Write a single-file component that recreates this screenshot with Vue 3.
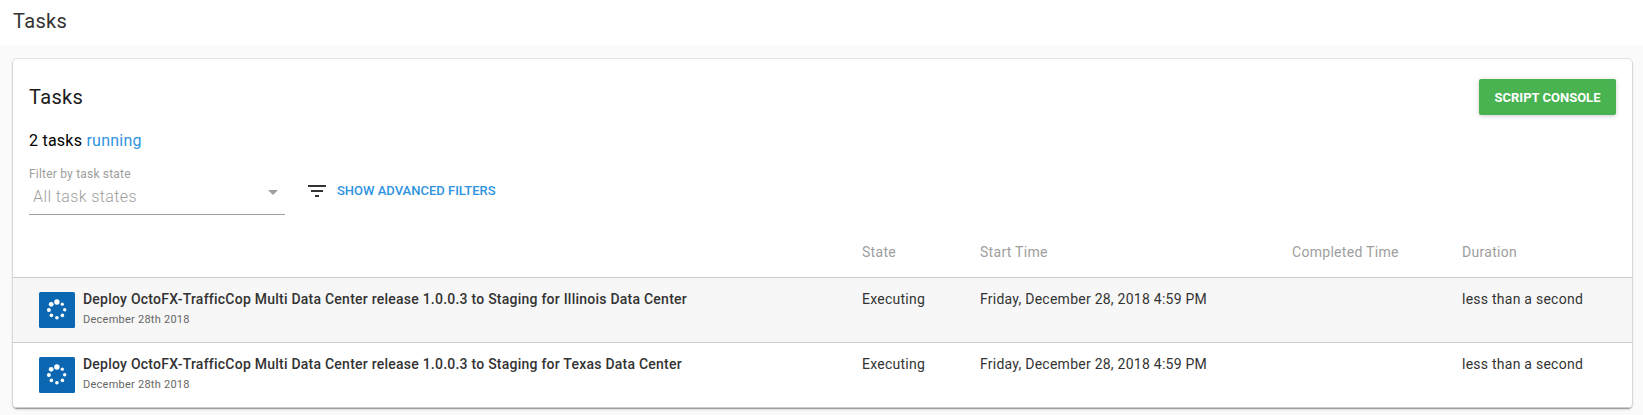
<script setup>
const tasks = [
  { id: 1, name: 'Deploy OctoFX-TrafficCop Multi Data Center release 1.0.0.3 to Staging for Illinois Data Center' },
  { id: 2, name: 'Deploy OctoFX-TrafficCop Multi Data Center release 1.0.0.3 to Staging for Texas Data Center' },
]
const dots = [
  { x: 17.9, y: 10, r: 2.7 },
  { x: 23.3, y: 12.2, r: 1.6 },
  { x: 25.7, y: 17.8, r: 1.7 },
  { x: 23.4, y: 23.4, r: 1.8 },
  { x: 17.9, y: 25.7, r: 1.8 },
  { x: 12.4, y: 23.4, r: 1.8 },
  { x: 9.9, y: 17.9, r: 2 },
  { x: 12.2, y: 12.3, r: 2.4 },
]
</script>

<template>
  <div class="page">
    <header class="topbar">Tasks</header>
    <main class="card">
      <div class="card-head">
        <h1>Tasks</h1>
        <button class="console" type="button">Script console</button>
      </div>
      <p class="summary">2 tasks <a>running</a></p>
      <div class="filters">
        <div class="select">
          <label>Filter by task state</label>
          <div class="value">
            <span>All task states</span>
            <svg width="24" height="24" viewBox="0 0 24 24"><path d="M7 10l5 5 5-5z" fill="#9e9e9e" /></svg>
          </div>
        </div>
        <a class="advanced">
          <svg width="24" height="24" viewBox="0 0 24 24"><path d="M10 18h4v-2h-4v2zM3 6v2h18V6H3zm3 7h12v-2H6v2z" fill="#333" /></svg>
          <span>Show advanced filters</span>
        </a>
      </div>
      <div class="row head">
        <span></span><span>State</span><span>Start Time</span><span>Completed Time</span><span>Duration</span>
      </div>
      <div v-for="task in tasks" :key="task.id" class="row item">
        <div class="task">
          <svg class="status" width="36" height="36" viewBox="0 0 36 36">
            <rect width="36" height="36" rx="1.5" fill="#0b67b2" />
            <circle v-for="(d, i) in dots" :key="i" :cx="d.x" :cy="d.y" :r="d.r" fill="#fff" />
          </svg>
          <div>
            <div class="name">{{ task.name }}</div>
            <div class="date">December 28th 2018</div>
          </div>
        </div>
        <span>Executing</span><span>Friday, December 28, 2018 4:59 PM</span><span></span><span>less than a second</span>
      </div>
    </main>
  </div>
</template>

<style>
body {
  background: #fafafa;
}
</style>

<style scoped>
.page {
  height: 415px;
  overflow: hidden;
  background: #fafafa;
  font-family: Roboto, sans-serif;
  color: #333;
}
.topbar {
  box-sizing: border-box;
  height: 45px;
  padding: 9px 13px 0;
  background: #fff;
  font-size: 20px;
  line-height: 24px;
  letter-spacing: 0.35px;
}
.card {
  box-sizing: border-box;
  width: 1619px;
  height: 349px;
  margin: 14px 0 0 13px;
  background: #fff;
  border-radius: 4px;
  overflow: hidden;
  box-shadow: 0 1px 3px rgba(0, 0, 0, 0.2), 0 1px 1px rgba(0, 0, 0, 0.14), 0 2px 1px -1px rgba(0, 0, 0, 0.12), 0 0 0 0.5px rgba(0, 0, 0, 0.12);
}
.card-head {
  display: flex;
  align-items: center;
  justify-content: space-between;
  height: 36px;
  padding: 20px 16px 0;
}
h1 {
  margin: 0;
  font-size: 20px;
  font-weight: 400;
  line-height: 24px;
  letter-spacing: 0.35px;
  color: #1c1c1c;
}
.console {
  width: 137px;
  height: 36px;
  padding: 1px 0 0;
  border: 0;
  border-radius: 2px;
  background: #48b350;
  color: #fff;
  font: 700 13px/35px Roboto, sans-serif;
  text-transform: uppercase;
  box-shadow: 0 1px 4px rgba(0, 0, 0, 0.2);
}
.summary {
  margin: 16px 0 0 16px;
  font-size: 16px;
  line-height: 20px;
  letter-spacing: 0.24px;
  color: #000;
}
.summary a,
.advanced {
  color: #2f93e0;
}
.filters {
  display: flex;
  height: 75px;
  margin: 14px 0 0 16px;
}
.select {
  box-sizing: border-box;
  width: 256px;
  height: 50px;
  padding-top: 1px;
  border-bottom: 1px solid #9e9e9e;
  color: #9e9e9e;
}
.select label {
  display: block;
  font-size: 12px;
  line-height: 16px;
  letter-spacing: 0.2px;
}
.value {
  display: flex;
  justify-content: space-between;
  padding-left: 4px;
  font-size: 16px;
  font-weight: 300;
  line-height: 30px;
  letter-spacing: 0.4px;
  color: #9e9e9e;
}
.value svg {
  margin-top: -2px;
}
.advanced {
  display: flex;
  align-items: center;
  gap: 8px;
  height: 24px;
  margin: 14px 0 0 20px;
  font-size: 13px;
  font-weight: 500;
  text-transform: uppercase;
}
.advanced span {
  padding-bottom: 2px;
}
.row {
  display: grid;
  grid-template-columns: 849px 118px 312px 170px 1fr;
  box-sizing: border-box;
  font-size: 14px;
  line-height: 20px;
  letter-spacing: 0.25px;
}
.head {
  height: 37px;
  padding-top: 2px;
  color: #9e9e9e;
  letter-spacing: 0.29px;
}
.item {
  height: 65px;
  padding-top: 11px;
  border-top: 1px solid #ccc;
}
.item:nth-child(5) {
  background: #f7f7f7;
}
.item:last-child {
  height: 66px;
  border-bottom: 1px solid #ccc;
}
.task {
  display: flex;
  gap: 8px;
  padding-left: 26px;
}
.status {
  margin-top: 3px;
}
.name {
  font-weight: 500;
  letter-spacing: 0.235px;
}
.date {
  padding-top: 1px;
  font-size: 11px;
  color: #666;
}
</style>
